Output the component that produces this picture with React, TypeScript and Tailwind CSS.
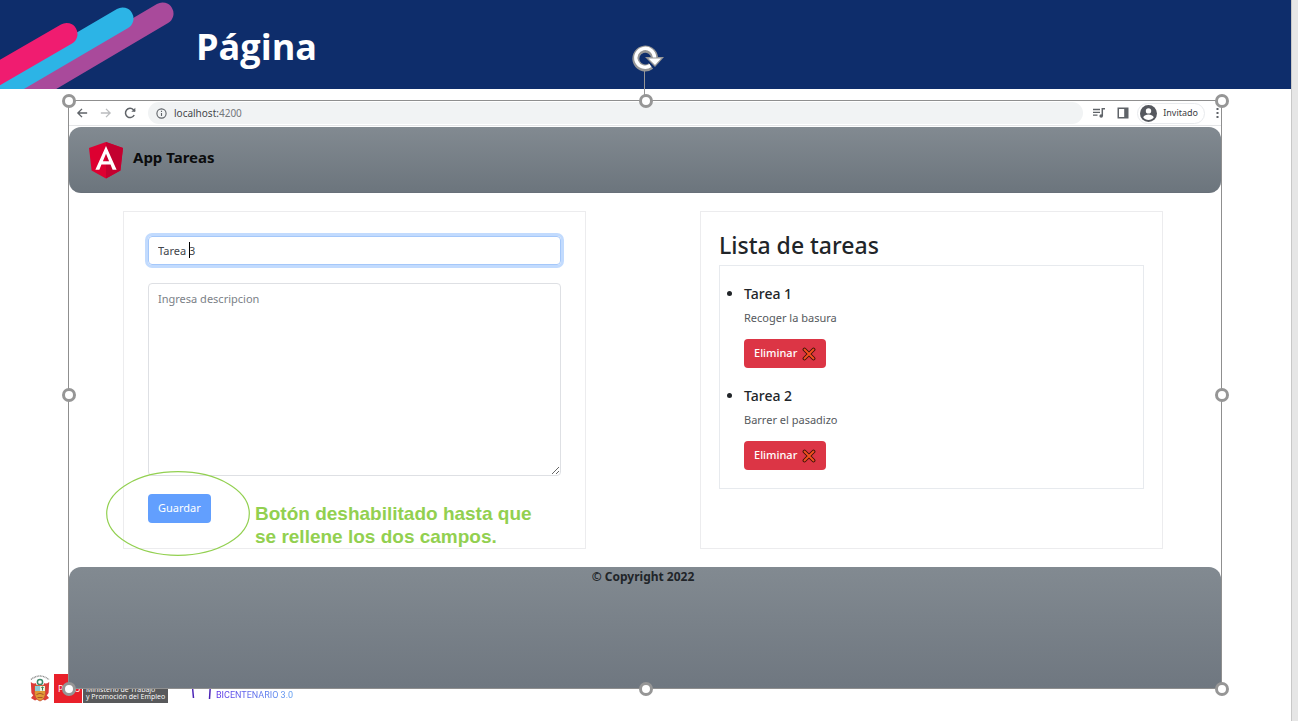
import { useState } from "react";
import type { ReactNode } from "react";

const tasks = [
  { title: "Tarea 1", description: "Recoger la basura" },
  { title: "Tarea 2", description: "Barrer el pasadizo" },
];

const handlePlaces = [
  "left-0 top-0",
  "left-1/2 top-0",
  "left-full top-0",
  "left-0 top-1/2",
  "left-full top-1/2",
  "left-0 top-full",
  "left-1/2 top-full",
  "left-full top-full",
];

function Stripes() {
  return (
    <svg className="h-[89px] w-[176px] shrink-0" viewBox="0 0 176 89" strokeLinecap="round" strokeWidth="22" fill="none" aria-hidden="true">
      <path d="M162.500 13.500 16 100" stroke="#a94a9b" />
      <path d="M122.500 18.500-20 102" stroke="#2cb4e6" />
      <path d="M66.500 34-30 90" stroke="#f01c70" />
    </svg>
  );
}

function AngularLogo() {
  return (
    <svg className="h-[38px] w-[36px]" viewBox="27 25 196 208" aria-hidden="true">
      <path fill="#dd0031" d="M125 30 31.900 63.200l14.200 123.100L125 230l78.900-43.700 14.200-123.100z" />
      <path fill="#c3002f" d="M125 30v200l78.900-43.700 14.200-123.100z" />
      <path fill="#fff" d="M125 52.100 66.800 182.600h21.700l11.700-29.200h49.400l11.700 29.200H183zM142 135.400h-34l17-40.900z" />
    </svg>
  );
}

function ToolbarButton({ label, children }: { label: string; children: ReactNode }) {
  return (
    <button type="button" aria-label={label} className="flex h-4 w-4 items-center justify-center">
      {children}
    </button>
  );
}

function BrowserBar() {
  return (
    <div className="flex h-[25px] items-center border-b border-[#e4e5e7] pl-[5px] text-[#5f6368]">
      <div className="flex gap-2">
        <ToolbarButton label="Atrás">
          <svg className="h-3 w-3" viewBox="0 0 14 14" fill="none" stroke="#5f6368" strokeWidth="1.600"><path d="M13 7H2.500M7 2.200 2.200 7 7 11.800" /></svg>
        </ToolbarButton>
        <ToolbarButton label="Adelante">
          <svg className="h-3 w-3" viewBox="0 0 14 14" fill="none" stroke="#babcbe" strokeWidth="1.500"><path d="M1 7h10.500M7 2.200 11.800 7 7 11.800" /></svg>
        </ToolbarButton>
        <ToolbarButton label="Recargar">
          <svg className="h-[14px] w-[14px]" viewBox="0 0 14 14" fill="none" stroke="#5f6368" strokeWidth="1.500"><path d="M11.200 9A4.600 4.600 0 1 1 10.400 3.700L12 5.200" /><path d="M12.300 1.800v4H8.300z" fill="#5f6368" stroke="none" /></svg>
        </ToolbarButton>
      </div>
      <div className="ml-[10px] flex h-[22px] flex-1 items-center gap-[7px] rounded-full bg-[#f1f3f4] pl-2">
        <svg className="h-[11px] w-[11px]" viewBox="0 0 11 11" fill="none" stroke="#5f6368" aria-hidden="true">
          <circle cx="5.500" cy="5.500" r="4.600" strokeWidth="1.100" />
          <path d="M5.500 4.900v3.200M5.500 2.700v1.200" strokeWidth="1.100" />
        </svg>
        <span className="text-[10px] leading-4 text-[#45484c]">localhost:<span className="text-[#74787c]">4200</span></span>
      </div>
      <div className="ml-2 flex items-center gap-2">
        <ToolbarButton label="Controles multimedia">
          <svg className="h-[12px] w-[14px]" viewBox="0 0 14 12" fill="none" stroke="#5f6368" strokeWidth="1.300"><path d="M1 2.500h7M1 5.300h7M1 8.100h4.500" /><path d="M10.300 9V1.800H13" strokeWidth="1.500" /><circle cx="9.200" cy="9" r="1.800" fill="#5f6368" stroke="none" /></svg>
        </ToolbarButton>
        <ToolbarButton label="Panel lateral">
          <svg className="h-[12px] w-[12px]" viewBox="0 0 12 12"><path fill="#5f6368" fillRule="evenodd" d="M.5.5h11v11H.5zM2 2v8h5.200V2z" /></svg>
        </ToolbarButton>
      </div>
      <button type="button" className="ml-[6px] flex h-[21px] items-center gap-[6px] rounded-full border border-[#e8eaed] pl-[2px] pr-[6px] text-[9px] text-[#3c4043]">
        <svg className="h-[17px] w-[17px]" viewBox="0 0 17 17" aria-hidden="true">
          <circle cx="8.500" cy="8.500" r="8.500" fill="#55585e" />
          <circle cx="8.500" cy="5.900" r="2.700" fill="#fff" />
          <path d="M3.200 12.200c.8-1.900 3.400-2.700 5.300-2.700s4.500.8 5.300 2.700a6.300 6.300 0 0 1-10.600 0z" fill="#fff" />
        </svg>
        Invitado
      </button>
      <button type="button" aria-label="Más opciones" className="ml-[11px] w-[5px]">
        <svg className="h-[12px] w-[3px]" viewBox="0 0 3 12" fill="#5f6368"><path d="M.5 1h2v2h-2zM.5 5h2v2h-2zM.5 9h2v2h-2z" /></svg>
      </button>
    </div>
  );
}

function TaskForm() {
  const [title, setTitle] = useState("Tarea 3");
  const [description, setDescription] = useState("");
  return (
    <form className="flex flex-col border border-[#ececee] p-6 text-[11px] text-[#41464b]">
      <div className="relative">
        <input
          aria-label="Título"
          value={title}
          onChange={(e) => setTitle(e.target.value)}
          className="block h-[29px] w-full rounded border border-[#a5c8fa] px-[9px] outline-none ring-3 ring-[#c2dbfe]"
        />
        <span className="absolute left-[41px] top-[6px] h-4 w-px bg-black" />
      </div>
      <textarea
        aria-label="Descripción"
        placeholder="Ingresa descripcion"
        value={description}
        onChange={(e) => setDescription(e.target.value)}
        className="mt-[18px] block h-[193px] w-full rounded border border-[#dee0e4] px-[9px] py-[6px] leading-[18px] placeholder:text-[#7b8187]"
      />
      <div className="relative mt-[18px] flex">
        <button type="button" disabled className="h-[29px] rounded bg-[#629ffe] px-[10px] text-white">Guardar</button>
        <svg className="pointer-events-none absolute -left-[42px] -top-[23px] h-[85px] w-[144px]" viewBox="0 0 144 85" fill="none" aria-hidden="true">
          <ellipse cx="72" cy="42.500" rx="71.300" ry="41.800" stroke="#92d050" strokeWidth="1.200" />
        </svg>
        <p className="absolute left-[107px] top-[8px] whitespace-nowrap font-['Liberation_Sans',sans-serif] text-[19px] font-bold leading-[23px] text-[#92d050]">
          Botón deshabilitado hasta que<br />se rellene los dos campos.
        </p>
      </div>
    </form>
  );
}

function TaskList() {
  return (
    <section className="border border-[#ececee] px-[18px] pb-[59px] pt-[18px]">
      <h2 className="text-[23px] font-medium leading-[30px] text-[#212529]">Lista de tareas</h2>
      <ul className="mt-[5px] flex list-disc flex-col gap-[17px] border border-[#e7eaee] pb-[18px] pl-6 pt-[17px]">
        {tasks.map((task) => (
          <li key={task.title} className="text-[14px] text-[#212529]">
            <h3 className="font-medium leading-5">{task.title}</h3>
            <p className="mt-[5px] text-[11px] leading-[18px] text-[#55595d]">{task.description}</p>
            <button type="button" className="mt-[12px] flex h-[29px] items-center gap-[5px] rounded bg-[#dc3545] px-[10px] text-[11px] font-medium text-white">
              Eliminar
              <svg className="h-[14px] w-[14px]" viewBox="0 0 14 14" strokeLinecap="round" aria-hidden="true">
                <path d="m2.500 2.500 9 9M11.500 2.500l-9 9" stroke="#3b1208" strokeWidth="3.800" />
                <path d="m2.500 2.500 9 9M11.500 2.500l-9 9" stroke="#f4511e" strokeWidth="1.900" />
              </svg>
            </button>
          </li>
        ))}
      </ul>
    </section>
  );
}

function Selection() {
  return (
    <div className="pointer-events-none absolute inset-0 border border-[#8f8f8f]">
      <svg className="absolute -top-[58px] left-1/2 h-[58px] w-[38px] -translate-x-1/2" viewBox="0 0 38 58" fill="none" aria-hidden="true">
        <path d="M18.500 28v30" stroke="#969696" />
        <path d="M25 23A9.400 9.400 0 1 1 28.600 14.500" stroke="#969696" strokeWidth="7" />
        <path d="M19 14h19l-9 10z" fill="#969696" />
        <path d="M24.500 22.500A9.400 9.400 0 1 1 28.600 14.500" stroke="#fff" strokeWidth="3.400" />
        <path d="M22.500 15.500h12.500l-6 6.500z" fill="#fff" />
      </svg>
      <div className="absolute -bottom-px -right-px left-0 top-0">
        {handlePlaces.map((place) => (
          <span key={place} className={`absolute h-[14px] w-[14px] -translate-x-1/2 -translate-y-1/2 rounded-full border-[3px] border-[#969696] bg-white ${place}`} />
        ))}
      </div>
    </div>
  );
}

function PeruEmblem() {
  return (
    <svg className="h-[29px] w-[20px]" viewBox="0 0 20 29" aria-hidden="true">
      <path d="M1 5.500Q10-1.500 19 5.500" fill="none" stroke="#8a8a8a" strokeWidth="1.400" strokeDasharray="1 .6" />
      <path d="M.8 8q3 2.500 5 1l2 5-2 8q-5-1-4.500-5zM19.200 8q-3 2.500-5 1l-2 5 2 8q5-1 4.500-5z" fill="#dd3a3a" />
      <path d="M5 19 1 24l4 2.500L10 24l5 2.500 4-2.500-4-5z" fill="#dc3f38" />
      <circle cx="10" cy="8" r="2.600" fill="#fff" stroke="#3c8a6a" strokeWidth="1.500" />
      <path d="M4.500 11.500h11v7q0 6.500-5.500 8.500-5.500-2-5.500-8.500z" fill="#df9a35" stroke="#c94b30" strokeWidth=".8" />
      <path d="M5 12h5v5H5z" fill="#8dcbd6" />
      <path d="M10 12h5v5h-5z" fill="#eff0df" />
      <path d="M12.500 12.500v4M11.300 13.500h2.400" stroke="#388554" strokeWidth="1" />
      <path d="M6.500 20.500q3.500-2.500 7 0M7.500 23.500h5" fill="none" stroke="#a9542a" />
    </svg>
  );
}

function SlideFooter() {
  return (
    <footer className="-mt-[15px] flex h-[29px] items-stretch pl-[30px]">
      <PeruEmblem />
      <div className="ml-1 flex w-[28px] items-center bg-[#e9202a] pl-1 font-['Open_Sans',sans-serif] text-[9px] text-white">PERÚ</div>
      <div className="ml-px flex w-[85px] flex-col justify-end overflow-hidden whitespace-nowrap bg-[#58595b] pb-[3px] pl-[3px] font-['Open_Sans',sans-serif] text-[7px] leading-[7px] text-white">
        <span>Ministerio de Trabajo</span>
        <span>y Promoción del Empleo</span>
      </div>
      <svg className="ml-[22px] h-[29px] w-[24px]" viewBox="0 0 24 29" fill="none" stroke="#4a22b5" strokeWidth="1.500" aria-hidden="true">
        <path d="M1 6q2 8 2.500 18" />
        <path d="M21 6q-1 9-1.500 19" />
      </svg>
      <span className="ml-[2px] mt-[15px] bg-linear-to-r from-[#5b2ee5] to-[#5b9bf0] bg-clip-text font-['Roboto',sans-serif] text-[9px] leading-3 text-transparent">BICENTENARIO 3.0</span>
    </footer>
  );
}

export default function App() {
  return (
    <div className="flex min-h-screen bg-white font-['Noto_Sans',sans-serif]">
      <main className="min-w-0 flex-1">
        <header className="flex h-[89px] bg-[#0e2d6b]">
          <Stripes />
          <h1 className="ml-5 mt-[23px] font-['Open_Sans',sans-serif] text-[36px] font-bold leading-[48px] text-white">Página</h1>
        </header>
        <div className="relative z-10 ml-[68px] mr-[69px] mt-[11px] bg-white p-px">
          <BrowserBar />
          <div className="mt-px flex h-[66px] items-center gap-[9px] rounded-[12px] border-b border-[#687079] bg-linear-to-b from-[#828a91] to-[#6c757d] pl-[19px]">
            <AngularLogo />
            <span className="pb-1 text-[15px] font-bold text-[#0b0c0d]">App Tareas</span>
          </div>
          <div className="grid grid-cols-2 gap-[114px] pb-[18px] pl-[54px] pr-[58px] pt-[18px]">
            <TaskForm />
            <TaskList />
          </div>
          <div className="h-[121px] rounded-t-[12px] bg-linear-to-b from-[#828a91] to-[#6f7780] pr-1 text-center text-[12px] font-bold leading-5 text-[#212529]">
            © Copyright 2022
          </div>
          <Selection />
        </div>
        <SlideFooter />
      </main>
      <aside className="w-[7px] border-l border-[#c8c8c8] bg-[#e6e6e6]" />
    </div>
  );
}
